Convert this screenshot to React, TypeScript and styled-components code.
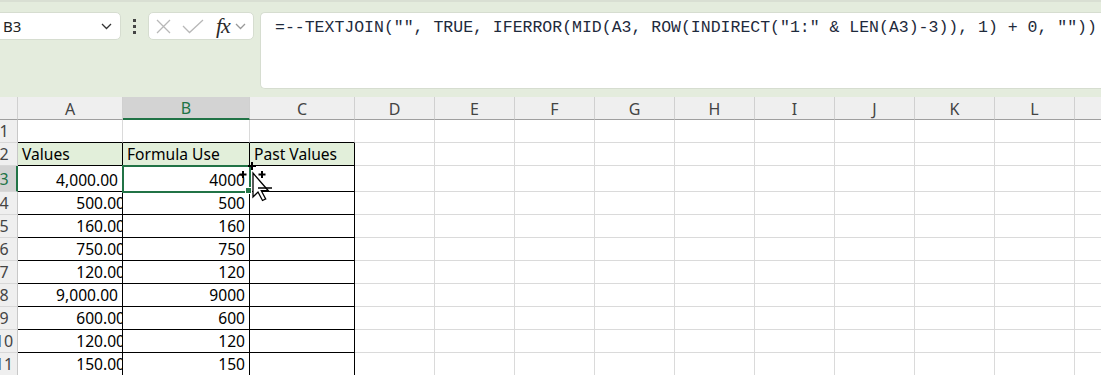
import styled, { createGlobalStyle } from 'styled-components';

const GlobalStyle = createGlobalStyle`
  html, body {
    margin: 0;
    padding: 0;
    overflow: hidden;
    background: #ffffff;
  }
  body {
    font-family: "Noto Sans", "Liberation Sans", sans-serif;
  }
`;

const Page = styled.div`
  width: 1101px;
  height: 375px;
  overflow: hidden;
  display: flex;
  flex-direction: column;
`;

// formula bar area
const Ribbon = styled.div`
  height: 97px;
  flex: none;
  box-sizing: border-box;
  background: #e4ecdd;
  border-top: 2px solid #d9dfd3;
  padding-top: 10px;
  display: flex;
  align-items: flex-start;
`;

const NameBox = styled.div`
  margin-left: -8px;
  width: 129px;
  height: 28px;
  box-sizing: border-box;
  background: #fff;
  border: 1px solid #d6ddd0;
  border-radius: 5px;
  display: flex;
  align-items: center;
  justify-content: space-between;
  padding: 0 8px 0 10px;
  font-size: 15px;
  color: #222;
`;

const Dots = styled.div`
  width: 27px;
  height: 28px;
  display: flex;
  flex-direction: column;
  align-items: center;
  justify-content: center;
  gap: 3px;
  span {
    width: 3px;
    height: 3px;
    background: #444;
  }
`;

const FxBox = styled.div`
  width: 106px;
  height: 28px;
  box-sizing: border-box;
  background: #fff;
  border: 1px solid #d6ddd0;
  border-radius: 5px;
  display: flex;
  align-items: center;
  padding-left: 7px;
  gap: 11px;
`;

const FxLabel = styled.span`
  font-family: "Liberation Serif", serif;
  font-style: italic;
  font-size: 22px;
  line-height: 22px;
  color: #2a2a2a;
  margin-left: 1px;
  margin-right: -6px;
  letter-spacing: -1px;
`;

const FormulaBox = styled.div`
  margin-left: 6px;
  flex: 1;
  height: 77px;
  box-sizing: border-box;
  background: #fff;
  border: 1px solid #d6ddd0;
  border-right: none;
  border-radius: 5px 0 0 5px;
  padding: 4px 0 0 14px;
  font-family: "Liberation Mono", "DejaVu Sans Mono", monospace;
  font-size: 16.5px;
  line-height: 22px;
  color: #1e2a3c;
  white-space: pre;
  overflow: hidden;
`;

// sheet grid
const Sheet = styled.div`
  position: relative;
  display: grid;
  grid-template-columns: 18px 105px 127px 105px repeat(10, 80px);
  grid-template-rows: 23px 23px 23px 26px repeat(8, 23px);
  font-size: 15.6px;
`;

const Corner = styled.div`
  background: #efefef;
  border-bottom: 1px solid #9f9f9f;
  border-right: 1px solid #d0d0d0;
  box-sizing: border-box;
`;

const ColHead = styled.div<{ $active?: boolean }>`
  box-sizing: border-box;
  background: ${p => (p.$active ? '#d3d3d3' : '#efefef')};
  border-bottom: ${p => (p.$active ? '2px solid #217346' : '1px solid #9f9f9f')};
  border-right: 1px solid #d0d0d0;
  color: ${p => (p.$active ? '#217346' : '#444')};
  font-size: 16px;
  display: flex;
  align-items: center;
  justify-content: center;
  padding-top: 1px;
`;

const RowHead = styled.div<{ $active?: boolean }>`
  box-sizing: border-box;
  background: ${p => (p.$active ? '#d3d3d3' : '#efefef')};
  border-right: ${p => (p.$active ? '2px solid #217346' : '1px solid #c8c8c8')};
  border-bottom: 1px solid #d8d8d8;
  color: ${p => (p.$active ? '#217346' : '#444')};
  font-size: 16px;
  overflow: hidden;
  display: flex;
  align-items: center;
  span {
    flex: none;
    width: 28px;
    margin-left: -10px;
    text-align: center;
  }
`;

const Cell = styled.div<{
  $boxed?: boolean;
  $topEdge?: boolean;
  $fill?: string;
  $align?: 'left' | 'right';
  $selected?: boolean;
}>`
  position: relative;
  box-sizing: border-box;
  background: ${p => p.$fill ?? '#fff'};
  border-right: 1px solid ${p => (p.$boxed ? '#000' : '#dadada')};
  border-bottom: 1px solid ${p => (p.$boxed || p.$topEdge ? '#000' : '#dadada')};
  color: #000;
  display: flex;
  align-items: flex-end;
  justify-content: ${p => (p.$align === 'right' ? 'flex-end' : 'flex-start')};
  padding: 0 4px 1px 4px;
  white-space: nowrap;
  overflow: hidden;
  line-height: 20px;
  ${p =>
    p.$selected &&
    `
    overflow: visible;
    z-index: 2;
    outline: 2px solid #217346;
    outline-offset: -1px;
    &::after {
      content: '';
      position: absolute;
      right: -3px;
      bottom: -3px;
      width: 5px;
      height: 5px;
      background: #217346;
      border: 1px solid #fff;
    }
  `}
`;

const Clipped = styled.span`
  margin-right: -7px;
`;

const Cursor = styled.svg`
  position: absolute;
  left: 238px;
  top: 65px;
  z-index: 5;
  overflow: visible;
`;

const cols = ['A', 'B', 'C', 'D', 'E', 'F', 'G', 'H', 'I', 'J', 'K', 'L', 'M'];

const rows: { a: string; b: string; clip: boolean }[] = [
  { a: '4,000.00', b: '4000', clip: false },
  { a: '500.00', b: '500', clip: true },
  { a: '160.00', b: '160', clip: true },
  { a: '750.00', b: '750', clip: true },
  { a: '120.00', b: '120', clip: true },
  { a: '9,000.00', b: '9000', clip: false },
  { a: '600.00', b: '600', clip: true },
  { a: '120.00', b: '120', clip: true },
  { a: '150.00', b: '150', clip: true },
];

const formula =
  '=--TEXTJOIN("", TRUE, IFERROR(MID(A3, ROW(INDIRECT("1:" & LEN(A3)-3)), 1) + 0, ""))';

function Chevron({ color }: { color: string }) {
  return (
    <svg width="11" height="7" viewBox="0 0 11 7">
      <path d="M1 1l4.5 4.5L10 1" fill="none" stroke={color} strokeWidth="1.3" />
    </svg>
  );
}

function FormulaBar() {
  return (
    <Ribbon>
      <NameBox>
        <span>B3</span>
        <Chevron color="#333" />
      </NameBox>
      <Dots>
        <span />
        <span />
        <span />
      </Dots>
      <FxBox>
        <svg width="15" height="15" viewBox="0 0 15 15">
          <path d="M1 1l13 13M14 1L1 14" stroke="#b8b8b8" strokeWidth="1.3" />
        </svg>
        <svg width="22" height="15" viewBox="0 0 22 15">
          <path d="M1 7l6.5 6.5L21 1" fill="none" stroke="#b8b8b8" strokeWidth="1.3" />
        </svg>
        <FxLabel>fx</FxLabel>
        <Chevron color="#999" />
      </FxBox>
      <FormulaBox>{formula}</FormulaBox>
    </Ribbon>
  );
}

function Grid() {
  return (
    <Sheet>
      <Corner />
      {cols.map(c => (
        <ColHead key={c} $active={c === 'B'}>
          {c}
        </ColHead>
      ))}

      <RowHead>
        <span>1</span>
      </RowHead>
      {cols.map((c, i) => (
        <Cell key={c} $topEdge={i < 3} />
      ))}

      <RowHead>
        <span>2</span>
      </RowHead>
      <Cell $boxed $fill="#e2efda">Values</Cell>
      <Cell $boxed $fill="#e2efda">Formula Use</Cell>
      <Cell $boxed $fill="#e2efda">Past Values</Cell>
      {cols.slice(3).map(c => (
        <Cell key={c} />
      ))}

      {rows.map((r, n) => (
        <Row key={n} num={n + 3} a={r.a} b={r.b} clip={r.clip} />
      ))}

      {/* mouse pointer caught in the screenshot */}
      <Cursor width="34" height="40" viewBox="0 0 34 40">
        <path d="M14 0v8M10 4h8" stroke="#000" strokeWidth="2" />
        <path d="M5 9v7M1.5 12.5h7" stroke="#000" strokeWidth="2" />
        <path d="M24 9v7M20.5 12.5h7" stroke="#000" strokeWidth="2" />
        <path
          d="M15 11v24l5-5 4.5 8.5 3.2-1.6-4.4-8.2h7z"
          fill="#fff"
          stroke="#000"
          strokeWidth="1.3"
          strokeLinejoin="miter"
        />
        <path d="M20 26h14" stroke="#000" strokeWidth="1.5" />
      </Cursor>
    </Sheet>
  );
}

function Row({ num, a, b, clip }: { num: number; a: string; b: string; clip: boolean }) {
  return (
    <>
      <RowHead $active={num === 3}>
        <span>{num}</span>
      </RowHead>
      <Cell $boxed $align="right">
        {clip ? <Clipped>{a}</Clipped> : a}
      </Cell>
      <Cell $boxed $align="right" $selected={num === 3}>
        {b}
      </Cell>
      <Cell $boxed />
      {cols.slice(3).map(c => (
        <Cell key={c} />
      ))}
    </>
  );
}

export default function App() {
  return (
    <>
      <GlobalStyle />
      <Page>
        <FormulaBar />
        <Grid />
      </Page>
    </>
  );
}
